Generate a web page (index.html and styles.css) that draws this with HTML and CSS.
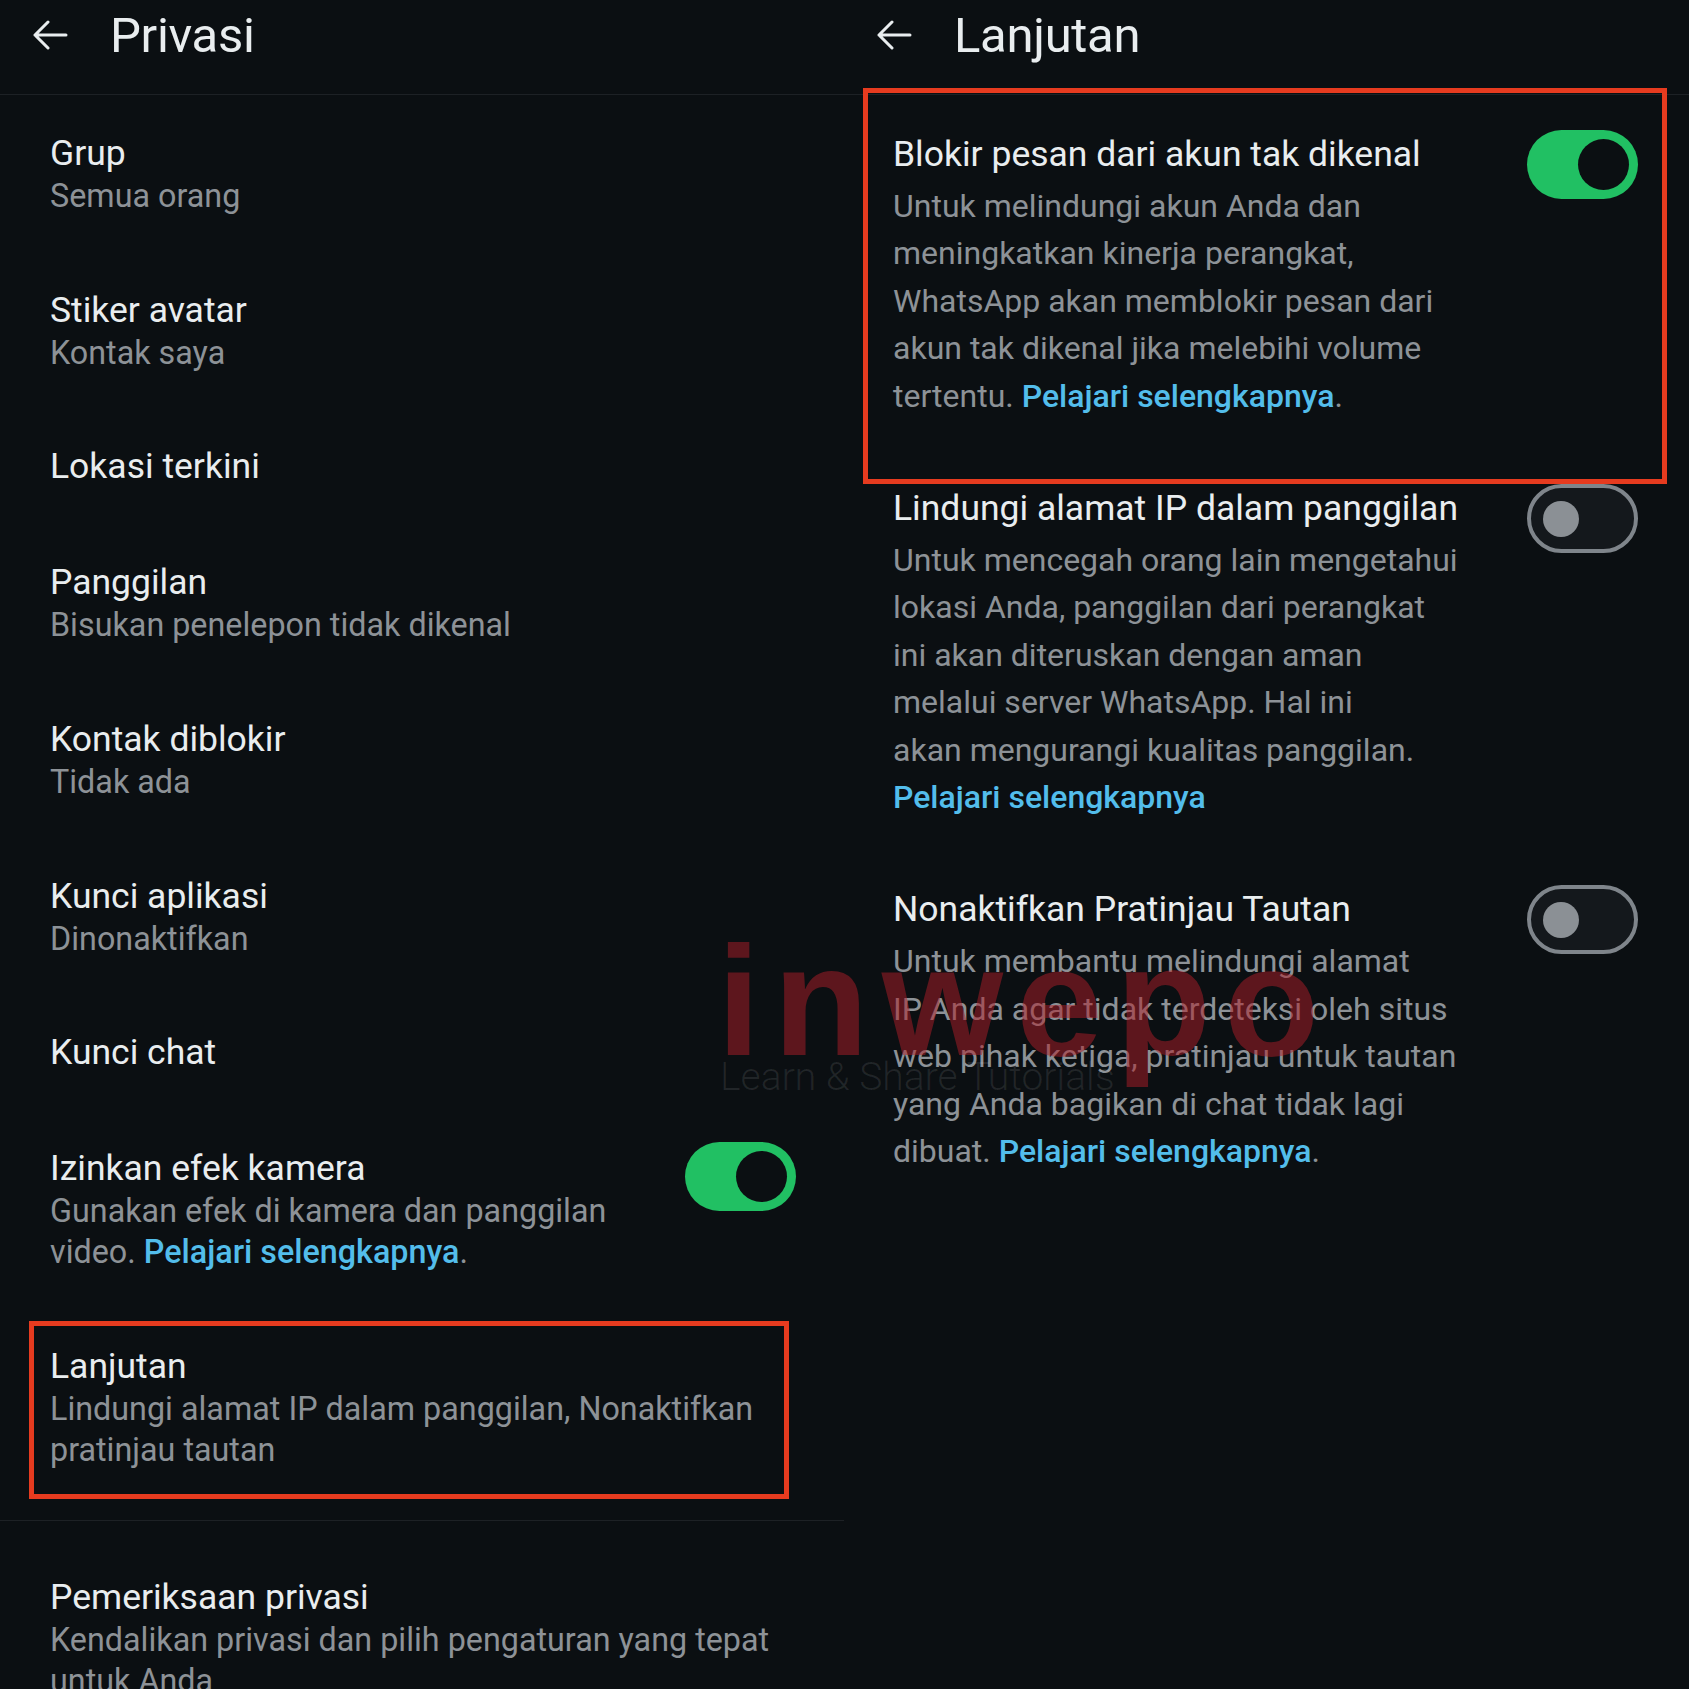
FILE: index.html
```html
<!DOCTYPE html>
<html lang="id">
<head>
    <meta charset="UTF-8">
    <meta name="viewport" content="width=device-width, initial-scale=1.0">
    <title>Privasi | Lanjutan</title>
    <link rel="stylesheet" href="styles.css">
</head>
<body>
    <div class="screens">
        <!-- Layar kiri: Privasi -->
        <section class="screen">
            <header class="appbar">
                <svg class="back" viewBox="0 0 36 30" aria-hidden="true">
                    <path d="M34 15H3M16 2L3 15l13 13" />
                </svg>
                <h1>Privasi</h1>
            </header>

            <ul class="list">
                <li class="item">
                    <div class="text">
                        <div class="title">Grup</div>
                        <div class="sub">Semua orang</div>
                    </div>
                </li>
                <li class="item">
                    <div class="text">
                        <div class="title">Stiker avatar</div>
                        <div class="sub">Kontak saya</div>
                    </div>
                </li>
                <li class="item single">
                    <div class="text">
                        <div class="title">Lokasi terkini</div>
                    </div>
                </li>
                <li class="item">
                    <div class="text">
                        <div class="title">Panggilan</div>
                        <div class="sub">Bisukan penelepon tidak dikenal</div>
                    </div>
                </li>
                <li class="item">
                    <div class="text">
                        <div class="title">Kontak diblokir</div>
                        <div class="sub">Tidak ada</div>
                    </div>
                </li>
                <li class="item">
                    <div class="text">
                        <div class="title">Kunci aplikasi</div>
                        <div class="sub">Dinonaktifkan</div>
                    </div>
                </li>
                <li class="item single">
                    <div class="text">
                        <div class="title">Kunci chat</div>
                    </div>
                </li>
                <li class="item">
                    <div class="text">
                        <div class="title">Izinkan efek kamera</div>
                        <div class="sub">Gunakan efek di kamera dan panggilan<br>video. <a class="link">Pelajari selengkapnya</a>.</div>
                    </div>
                    <span class="switch on"></span>
                </li>
                <li class="item marked-left">
                    <div class="text">
                        <div class="title">Lanjutan</div>
                        <div class="sub">Lindungi alamat IP dalam panggilan, Nonaktifkan<br>pratinjau tautan</div>
                    </div>
                </li>
                <li class="divider"></li>
                <li class="item">
                    <div class="text">
                        <div class="title">Pemeriksaan privasi</div>
                        <div class="sub">Kendalikan privasi dan pilih pengaturan yang tepat<br>untuk Anda</div>
                    </div>
                </li>
            </ul>
        </section>

        <!-- Layar kanan: Lanjutan -->
        <section class="screen">
            <header class="appbar">
                <svg class="back" viewBox="0 0 36 30" aria-hidden="true">
                    <path d="M34 15H3M16 2L3 15l13 13" />
                </svg>
                <h1>Lanjutan</h1>
            </header>

            <ul class="list">
                <li class="option marked-right">
                    <div class="text">
                        <div class="title">Blokir pesan dari akun tak dikenal</div>
                        <div class="desc">Untuk melindungi akun Anda dan<br>meningkatkan kinerja perangkat,<br>WhatsApp akan memblokir pesan dari<br>akun tak dikenal jika melebihi volume<br>tertentu. <a class="link">Pelajari selengkapnya</a>.</div>
                    </div>
                    <span class="switch on"></span>
                </li>
                <li class="option">
                    <div class="text">
                        <div class="title">Lindungi alamat IP dalam panggilan</div>
                        <div class="desc">Untuk mencegah orang lain mengetahui<br>lokasi Anda, panggilan dari perangkat<br>ini akan diteruskan dengan aman<br>melalui server WhatsApp. Hal ini<br>akan mengurangi kualitas panggilan.<br><a class="link">Pelajari selengkapnya</a></div>
                    </div>
                    <span class="switch"></span>
                </li>
                <li class="option">
                    <div class="text">
                        <div class="title">Nonaktifkan Pratinjau Tautan</div>
                        <div class="desc">Untuk membantu melindungi alamat<br>IP Anda agar tidak terdeteksi oleh situs<br>web pihak ketiga, pratinjau untuk tautan<br>yang Anda bagikan di chat tidak lagi<br>dibuat. <a class="link">Pelajari selengkapnya</a>.</div>
                    </div>
                    <span class="switch"></span>
                </li>
            </ul>
        </section>
    </div>

    <div class="watermark">
        <div class="wm-logo">inwepo</div>
        <div class="wm-tag">Learn &amp; Share Tutorials</div>
    </div>
</body>
</html>
```

FILE: styles.css
```css
:root {
    --bg: #0b0f12;
    --line: #1d2125;
    --text: #e9edef;
    --muted: #8d9297;
    --link: #53bdeb;
    --green: #21c063;
    --mark: #e63b1f;
}

* {
    margin: 0;
    padding: 0;
    box-sizing: border-box;
}

html, body {
    width: 1689px;
    height: 1689px;
    overflow: hidden;
}

body {
    background: var(--bg);
    color: var(--text);
    font-family: 'Roboto', 'Liberation Sans', sans-serif;
    position: relative;
}

.screens {
    display: grid;
    grid-template-columns: 844px 845px;
}

.screen {
    min-width: 0;
}

/* App bar */
.appbar {
    height: 95px;
    display: flex;
    align-items: center;
    border-bottom: 1px solid var(--line);
    padding-left: 32px;
    padding-bottom: 24px;
}

.back {
    width: 36px;
    height: 30px;
    fill: none;
    stroke: var(--text);
    stroke-width: 3;
    stroke-linecap: round;
    stroke-linejoin: round;
}

.appbar h1 {
    font-size: 49px;
    font-weight: 400;
    margin-left: 42px;
    letter-spacing: -0.3px;
}

.list {
    list-style: none;
}

/* Privasi list */
.item {
    display: flex;
    align-items: flex-start;
    padding: 35px 48px 35px 50px;
    position: relative;
}

.item.single {
    padding-top: 34px;
    padding-bottom: 35px;
}

.text {
    flex: 1;
    min-width: 0;
}

.title {
    font-size: 35.5px;
    line-height: 46px;
    white-space: nowrap;
}

.sub {
    font-size: 32.3px;
    line-height: 41px;
    color: var(--muted);
    white-space: nowrap;
}

.link {
    color: var(--link);
    font-weight: 500;
}

.divider {
    height: 1px;
    background: var(--line);
    margin: 14px 0 18px;
}

/* Lanjutan list */
.option {
    display: flex;
    align-items: flex-start;
    padding: 36px 51px 29px 49px;
    position: relative;
}

.desc {
    font-size: 32px;
    line-height: 47.4px;
    margin-top: 6px;
    color: var(--muted);
    white-space: nowrap;
}

/* Switch */
.switch {
    flex: none;
    width: 111px;
    height: 69px;
    border-radius: 35px;
    border: 4px solid #7f858b;
    background: #14181c;
    position: relative;
    margin-top: -1px;
}

.switch::after {
    content: '';
    position: absolute;
    top: 50%;
    left: 12px;
    width: 36px;
    height: 36px;
    margin-top: -18px;
    border-radius: 50%;
    background: #8b9095;
}

.switch.on {
    border: none;
    background: var(--green);
}

.switch.on::after {
    left: auto;
    right: 9px;
    width: 51px;
    height: 51px;
    margin-top: -25.5px;
    background: var(--bg);
}

.item .switch {
    margin-top: -3px;
}

/* Red annotation boxes */
.marked-left::after,
.marked-right::after {
    content: '';
    position: absolute;
    border: 5px solid var(--mark);
    pointer-events: none;
}

.marked-left::after {
    top: 13px;
    bottom: 7px;
    left: 29px;
    right: 55px;
}

.marked-right::after {
    top: -7px;
    bottom: -35px;
    left: 19px;
    right: 22px;
}

/* Watermark */
.watermark {
    position: absolute;
    left: 717px;
    top: 923px;
    pointer-events: none;
}

.wm-logo {
    font-family: 'Liberation Sans', sans-serif;
    font-weight: 700;
    font-size: 156px;
    line-height: 1;
    color: rgba(176, 30, 40, 0.5);
    letter-spacing: 13px;
}

.wm-tag {
    font-size: 39px;
    line-height: 42px;
    margin-top: -23px;
    margin-left: 3px;
    color: rgba(255, 255, 255, 0.09);
    font-weight: 300;
}
```
